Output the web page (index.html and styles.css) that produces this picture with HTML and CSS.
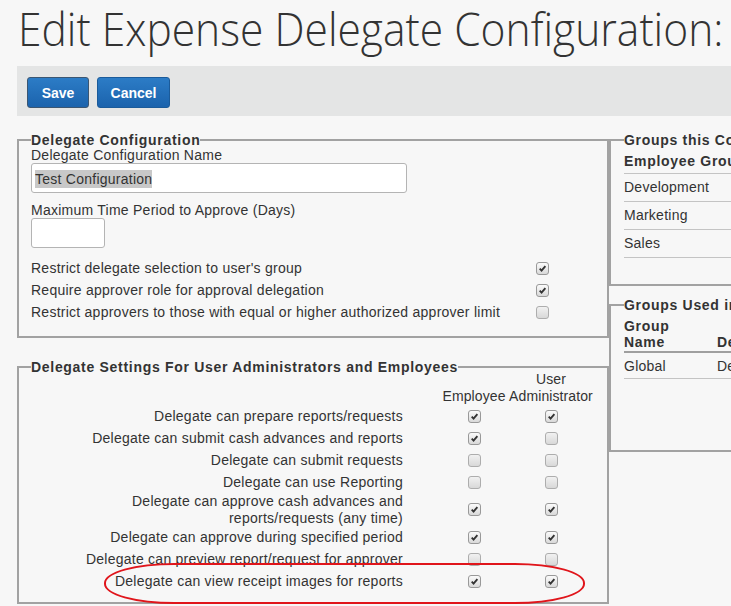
FILE: index.html
```html
<!DOCTYPE html>
<html>
<head>
<meta charset="utf-8">
<title>Edit Expense Delegate Configuration</title>
<link rel="stylesheet" href="styles.css">
</head>
<body>
<div class="page">
  <h1 class="title"><span class="title-text">Edit Expense Delegate Configuration:</span></h1>
  <div class="toolbar">
    <button class="btn btn-save">Save</button>
    <button class="btn btn-cancel">Cancel</button>
  </div>
  <div class="layout">
    <div class="col-left">
      <fieldset class="box box-config">
        <legend>Delegate Configuration</legend>
        <div class="field-label">Delegate Configuration Name</div>
        <div class="textbox wide"><span class="sel">Test Configuration</span></div>
        <div class="field-label spaced">Maximum Time Period to Approve (Days)</div>
        <div class="textbox short"></div>
        <div class="opts">
          <div class="opt"><span>Restrict delegate selection to user's group</span><span class="cb on"><svg viewBox="0 0 13 13"><path d="M3.2 6.6 L5.4 8.9 L9.9 3.6"/></svg></span></div>
          <div class="opt"><span>Require approver role for approval delegation</span><span class="cb on"><svg viewBox="0 0 13 13"><path d="M3.2 6.6 L5.4 8.9 L9.9 3.6"/></svg></span></div>
          <div class="opt"><span>Restrict approvers to those with equal or higher authorized approver limit</span><span class="cb"></span></div>
        </div>
      </fieldset>
      <fieldset class="box box-settings">
        <legend>Delegate Settings For User Administrators and Employees</legend>
        <div class="srow head">
          <span class="lbl"></span>
          <span class="hcell">Employee</span>
          <span class="hcell">User Administrator</span>
        </div>
        <div class="srow">
          <span class="lbl">Delegate can prepare reports/requests</span>
          <span class="cb on"><svg viewBox="0 0 13 13"><path d="M3.2 6.6 L5.4 8.9 L9.9 3.6"/></svg></span>
          <span class="cb on"><svg viewBox="0 0 13 13"><path d="M3.2 6.6 L5.4 8.9 L9.9 3.6"/></svg></span>
        </div>
        <div class="srow">
          <span class="lbl">Delegate can submit cash advances and reports</span>
          <span class="cb on"><svg viewBox="0 0 13 13"><path d="M3.2 6.6 L5.4 8.9 L9.9 3.6"/></svg></span>
          <span class="cb"></span>
        </div>
        <div class="srow">
          <span class="lbl">Delegate can submit requests</span>
          <span class="cb"></span>
          <span class="cb"></span>
        </div>
        <div class="srow">
          <span class="lbl">Delegate can use Reporting</span>
          <span class="cb"></span>
          <span class="cb"></span>
        </div>
        <div class="srow two">
          <span class="lbl">Delegate can approve cash advances and<br>reports/requests (any time)</span>
          <span class="cb on"><svg viewBox="0 0 13 13"><path d="M3.2 6.6 L5.4 8.9 L9.9 3.6"/></svg></span>
          <span class="cb on"><svg viewBox="0 0 13 13"><path d="M3.2 6.6 L5.4 8.9 L9.9 3.6"/></svg></span>
        </div>
        <div class="srow">
          <span class="lbl">Delegate can approve during specified period</span>
          <span class="cb on"><svg viewBox="0 0 13 13"><path d="M3.2 6.6 L5.4 8.9 L9.9 3.6"/></svg></span>
          <span class="cb on"><svg viewBox="0 0 13 13"><path d="M3.2 6.6 L5.4 8.9 L9.9 3.6"/></svg></span>
        </div>
        <div class="srow">
          <span class="lbl">Delegate can preview report/request for approver</span>
          <span class="cb"></span>
          <span class="cb"></span>
        </div>
        <div class="srow marked">
          <span class="lbl">Delegate can view receipt images for reports</span>
          <span class="cb on"><svg viewBox="0 0 13 13"><path d="M3.2 6.6 L5.4 8.9 L9.9 3.6"/></svg></span>
          <span class="cb on"><svg viewBox="0 0 13 13"><path d="M3.2 6.6 L5.4 8.9 L9.9 3.6"/></svg></span>
          <span class="ring"></span>
        </div>
      </fieldset>
    </div>
    <div class="col-right">
      <fieldset class="box box-groups">
        <legend>Groups this Configuration Applies To</legend>
        <div class="gh">Employee Group</div>
        <div class="gr">Development</div>
        <div class="gr">Marketing</div>
        <div class="gr">Sales</div>
      </fieldset>
      <fieldset class="box box-used">
        <legend>Groups Used in Other Configurations</legend>
        <div class="uh"><span class="c1">Group Name</span><span class="c2">Delegate Configuration</span></div>
        <div class="ur"><span class="c1">Global</span><span class="c2">Default Configuration</span></div>
      </fieldset>
    </div>
  </div>
</div>
</body>
</html>
```
FILE: styles.css
```css
html, body {
  margin: 0;
  overflow: hidden;
}
body {
  background: #f7f7f7;
  color: #333;
  font-family: "Liberation Sans", Arial, sans-serif;
  font-size: 14px;
  letter-spacing: 0.25px;
}
.page {
  width: 1000px;
  padding-left: 17px;
}
.title {
  margin: 0 0 10px 1px;
  height: 56px;
  font-family: "Open Sans", sans-serif;
  font-weight: 300;
  font-stretch: 90%;
  font-size: 46px;
  line-height: 56px;
  letter-spacing: 0;
  white-space: nowrap;
  color: #333;
}
.title-text {
  display: inline-block;
  transform: scaleX(0.925);
  transform-origin: left center;
}
.toolbar {
  background: #e4e5e5;
  height: 50px;
  box-sizing: border-box;
  padding: 11px 0 0 10px;
  display: flex;
  align-items: flex-start;
  gap: 8px;
}
.btn {
  height: 31px;
  padding: 0;
  font: bold 14px "Liberation Sans", Arial, sans-serif;
  letter-spacing: 0;
  color: #fff;
  background: linear-gradient(#2c7cc6, #1b63ad);
  border: 1px solid #1b5b9a;
  border-radius: 3px;
}
.btn-save { width: 62px; border-color: #3b5672; }
.btn-cancel { width: 73px; }

.layout {
  display: flex;
  align-items: flex-start;
  margin-top: 16px;
}
.col-left { width: 592px; }
.col-right { width: 400px; }

.box {
  margin: 0;
  min-width: 0;
  border: 2px solid #a2a2a2;
  padding: 0 12px 12px;
}
.box legend {
  padding: 0;
  font-weight: bold;
  font-size: 14px;
  line-height: 16px;
  letter-spacing: 0.7px;
  white-space: nowrap;
  color: #333;
}

/* config box */
.box-config { padding-bottom: 13px; }
.field-label { line-height: 15px; }
.field-label.spaced { margin-top: 9px; line-height: 16px; }
.textbox {
  box-sizing: border-box;
  height: 30px;
  border: 1px solid #b4b4b4;
  border-radius: 3px;
  background: #fff;
  padding: 6px 3px 0;
}
.textbox.wide { width: 376px; }
.textbox.short { width: 74px; }
.sel {
  display: inline-block;
  background: #c8c8c8;
  line-height: 18px;
}
.opts { margin-top: 9px; }
.opt {
  display: grid;
  grid-template-columns: 505px 13px;
  height: 22px;
  align-items: center;
  white-space: nowrap;
}

/* checkbox */
.cb {
  display: block;
  width: 13px;
  height: 13px;
  box-sizing: border-box;
  border: 1px solid #adadad;
  border-radius: 3px;
  background: linear-gradient(#f1f1f1, #d8d8d8);
}
.cb.on {
  border-color: #999;
  background: linear-gradient(#fbfbfb, #d9d9d9);
}
.cb svg {
  display: block;
  width: 11px;
  height: 11px;
}
.cb svg path {
  fill: none;
  stroke: #333;
  stroke-width: 2.2;
}

/* settings box */
.box-settings {
  margin-top: 21px;
  padding-bottom: 10px;
}
.srow {
  display: grid;
  grid-template-columns: 411px 64px 90px;
  min-height: 22px;
  align-items: center;
  justify-items: center;
  line-height: 17px;
}
.srow.two { line-height: 16.5px; }
.srow .lbl {
  justify-self: stretch;
  text-align: right;
  padding-right: 39px;
  white-space: nowrap;
}
.srow.head {
  margin-top: -4px;
  align-items: end;
  text-align: center;
}
.hcell { line-height: 17px; letter-spacing: 0.1px; }
.srow.marked { position: relative; }
.ring {
  position: absolute;
  left: 73px;
  top: -7px;
  width: 481px;
  height: 41px;
  box-sizing: border-box;
  border: 2px solid #e0151b;
  border-radius: 70px / 20px;
}

/* right column */
.box-groups,
.box-used {
  padding-left: 13px;
  padding-right: 13px;
}
.box-groups { padding-bottom: 26px; }
.gh {
  font-weight: bold;
  letter-spacing: 0.7px;
  line-height: 16px;
  padding: 5px 0 4px;
  border-bottom: 1px solid #c4c4c4;
  white-space: nowrap;
}
.gr {
  line-height: 16px;
  padding: 5px 0 6px;
  border-bottom: 1px solid #c4c4c4;
}
.box-used {
  margin-top: 11px;
  padding-bottom: 71px;
}
.uh, .ur {
  display: grid;
  grid-template-columns: 93px 1fr;
  line-height: 16px;
  align-items: end;
}
.uh {
  font-weight: bold;
  letter-spacing: 0.7px;
  padding-top: 5px;
  padding-bottom: 1px;
  border-bottom: 2px solid #9f9f9f;
}
.uh .c1 { max-width: 60px; }
.ur {
  padding: 5px 0 4px;
  border-bottom: 1px solid #c4c4c4;
}
.uh .c2, .ur .c2 { white-space: nowrap; }
```
